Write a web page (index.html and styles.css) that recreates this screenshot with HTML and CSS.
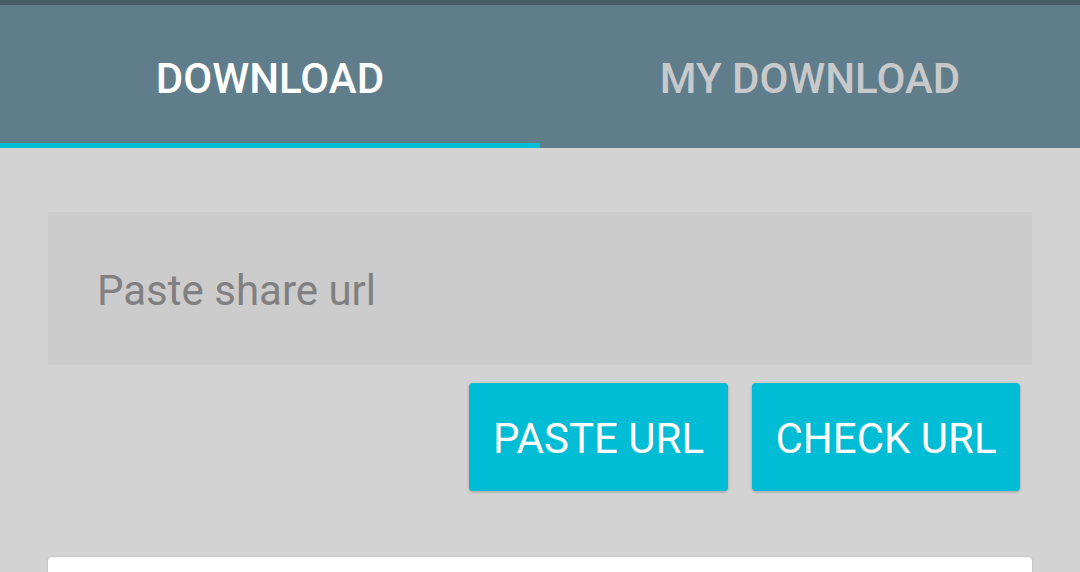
FILE: index.html
```html
<!DOCTYPE html>
<html>
<head>
<meta charset="utf-8">
<link rel="stylesheet" href="styles.css">
</head>
<body>
<div class="status"></div>
<nav class="tabs">
  <div class="tab active">DOWNLOAD</div>
  <div class="tab">MY DOWNLOAD</div>
</nav>
<main class="content">
  <div class="input">Paste share url</div>
  <div class="actions">
    <button class="btn btn-paste"><span class="btn-label">PASTE URL</span></button>
    <button class="btn btn-check"><span class="btn-label">CHECK URL</span></button>
  </div>
  <div class="card"></div>
</main>
</body>
</html>
```
FILE: styles.css
```css
html, body {
  margin: 0;
  padding: 0;
  height: 100%;
  overflow: hidden;
}
body {
  background: #d3d3d3;
  font-family: Roboto, "Liberation Sans", sans-serif;
}
.status {
  height: 5px;
  background: #4a5d68;
}
.tabs {
  display: flex;
  background: #607d8b;
  height: 143px;
}
.tab {
  flex: 1;
  display: flex;
  align-items: center;
  justify-content: center;
  font-size: 42px;
  font-weight: 500;
  color: #c8c9ca;
  box-sizing: border-box;
  padding-top: 8px;
  border-bottom: 5px solid transparent;
}
.tab.active {
  color: #ffffff;
  border-bottom-color: #00bcd4;
}
.content {
  padding: 64px 48px 0;
  display: flex;
  flex-direction: column;
}
.input {
  height: 153px;
  background: #cccccc;
  color: #808080;
  font-size: 42px;
  display: flex;
  align-items: center;
  padding-left: 49px;
  padding-top: 4px;
  box-sizing: border-box;
}
.actions {
  display: flex;
  justify-content: flex-end;
  gap: 24px;
  margin-top: 18px;
  padding-right: 12px;
}
.btn {
  height: 108px;
  border: none;
  border-radius: 4px;
  background: #00bcd4;
  color: #ffffff;
  font-family: Roboto, "Liberation Sans", sans-serif;
  font-size: 42px;
  font-weight: 400;
  padding: 0;
  white-space: nowrap;
  display: flex;
  align-items: center;
  justify-content: center;
  box-shadow: 0 1px 3px rgba(0,0,0,0.25);
}
.btn-label {
  display: inline-block;
  padding-top: 2px;
}
.btn-paste { width: 259px; }
.btn-check { width: 268px; }
.card {
  margin-top: 66px;
  height: 40px;
  background: #ffffff;
  border-radius: 4px;
  box-shadow: 0 0 2px rgba(0,0,0,0.2);
}
```
